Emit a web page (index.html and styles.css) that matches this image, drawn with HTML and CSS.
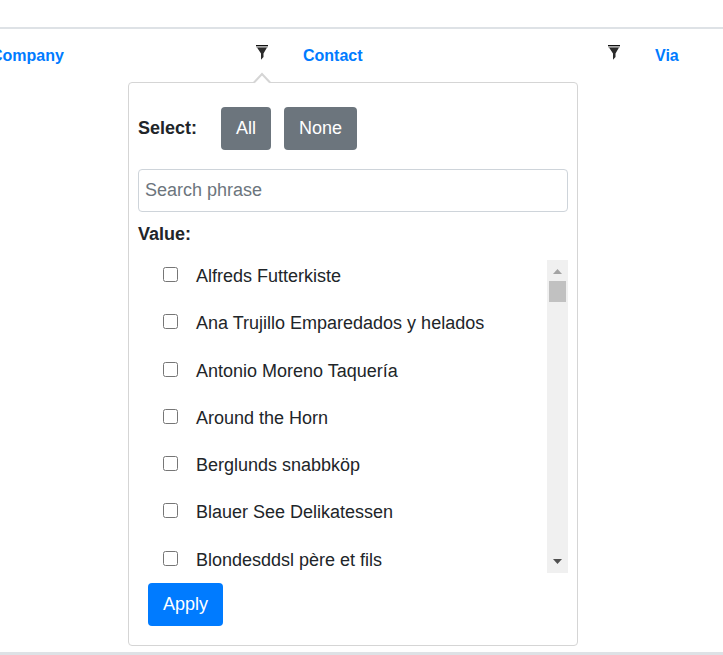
FILE: index.html
```html
<!DOCTYPE html>
<html lang="en">
<head>
<meta charset="utf-8">
<title>Customers</title>
<link rel="stylesheet" href="styles.css">
</head>
<body>
<main class="page">
  <table class="customers">
    <colgroup><col class="col-company"><col class="col-contact"><col></colgroup>
    <thead>
      <tr>
        <th scope="col"><div class="heading"><a href="#">Company</a>
          <button class="filter" type="button" aria-label="Filter by company"><svg viewBox="0 0 12 15" width="12" height="15"><path d="M0 0h12v1H0z" fill="#111"/><path d="M0 1h12v1.5H0z" fill="#aaa"/><path d="M1 2.5h10L7.5 8.5V12L5 14.8V8.5z" fill="#2b2b2b"/></svg></button></div></th>
        <th scope="col"><div class="heading"><a href="#">Contact</a>
          <button class="filter" type="button" aria-label="Filter by contact"><svg viewBox="0 0 12 15" width="12" height="15"><path d="M0 0h12v1H0z" fill="#111"/><path d="M0 1h12v1.5H0z" fill="#aaa"/><path d="M1 2.5h10L7.5 8.5V12L5 14.8V8.5z" fill="#2b2b2b"/></svg></button></div></th>
        <th scope="col"><div class="heading"><a href="#">Via</a></div></th>
      </tr>
    </thead>
  </table>
  <form class="popover">
    <svg class="caret" viewBox="0 0 20 12" width="20" height="12" aria-hidden="true"><path d="M2 11L10 2L18 11V12H2z" fill="#fff"/><path d="M2 10.5L10 2L18 10.5" fill="none" stroke="#d5d5d5" stroke-width="2"/></svg>
    <div class="select-row">
      <strong>Select:</strong>
      <button class="btn" type="button">All</button>
      <button class="btn" type="button">None</button>
    </div>
    <input class="search" type="text" placeholder="Search phrase" aria-label="Search phrase">
    <strong class="value-label">Value:</strong>
    <div class="list">
      <ul class="options">
        <li><label><input type="checkbox">Alfreds Futterkiste</label></li>
        <li><label><input type="checkbox">Ana Trujillo Emparedados y helados</label></li>
        <li><label><input type="checkbox">Antonio Moreno Taquería</label></li>
        <li><label><input type="checkbox">Around the Horn</label></li>
        <li><label><input type="checkbox">Berglunds snabbköp</label></li>
        <li><label><input type="checkbox">Blauer See Delikatessen</label></li>
        <li><label><input type="checkbox">Blondesddsl père et fils</label></li>
      </ul>
      <div class="scrollbar" aria-hidden="true">
        <svg viewBox="0 0 21 21" width="21" height="21"><path d="M6 14L10.5 9L15 14z" fill="#a3a3a3"/></svg>
        <div class="thumb"></div>
        <svg class="down" viewBox="0 0 21 21" width="21" height="21"><path d="M6 7L10.5 12L15 7z" fill="#505050"/></svg>
      </div>
    </div>
    <button class="btn apply" type="button">Apply</button>
  </form>
</main>
</body>
</html>
```

FILE: styles.css
```css
* {
  box-sizing: border-box;
}

body {
  margin: 0;
  background: #fff;
  color: #212529;
  font: 18px/27px "Liberation Sans", Arial, sans-serif;
}

.page {
  position: relative;
  min-height: 100vh;
  padding-top: 27px;
  overflow: hidden;
  border-bottom: 3px solid #dee2e6;
}

.customers {
  width: calc(100% + 21px);
  margin-left: -21px;
  table-layout: fixed;
  border-collapse: separate;
  border-spacing: 0;
}

.col-company {
  width: 312px;
}

.col-contact {
  width: 352px;
}

.customers th {
  padding: 15px 23px 14px 12px;
  border-top: 2px solid #dee2e6;
  font-size: 16px;
  line-height: 24px;
  text-align: left;
}

.heading {
  display: flex;
  justify-content: space-between;
}

.heading a {
  color: #007bff;
  text-decoration: none;
}

.filter {
  display: flex;
  align-items: flex-start;
  padding: 1px 0 0;
  border: 0;
  background: none;
}

.popover {
  position: absolute;
  top: 82px;
  left: 128px;
  width: 450px;
  padding: 24px 9px 19px;
  border: 1px solid #d5d5d5;
  border-radius: 4px;
  background: #fff;
}

.caret {
  position: absolute;
  top: -11px;
  left: 123px;
}

.select-row {
  display: flex;
  align-items: center;
  gap: 13px;
  margin-bottom: 19px;
}

.select-row strong {
  margin-right: 11px;
}

.btn {
  height: 43px;
  padding: 0 15px;
  border: 0;
  border-radius: 4px;
  background: #6c757d;
  color: #fff;
  font: inherit;
}

.search {
  display: block;
  width: 100%;
  height: 43px;
  padding: 0 6px;
  border: 1px solid #ced4da;
  border-radius: 4px;
  font: inherit;
}

.search::placeholder {
  color: #6c757d;
  opacity: 1;
}

.value-label {
  display: block;
  margin: 9px 0 12px;
}

.list {
  display: flex;
  height: 313px;
  overflow: hidden;
}

.options {
  display: grid;
  flex: 1;
  grid-template-rows: repeat(7, 1fr);
  height: 331px;
  margin: 3px 0 0;
  padding: 0 0 0 25px;
  list-style: none;
}

.options label {
  display: flex;
  align-items: flex-start;
  gap: 18px;
}

.options input {
  width: 15px;
  height: 15px;
  margin: 4px 0 0;
}

.scrollbar {
  display: flex;
  flex-direction: column;
  width: 21px;
  background: #f0f0f0;
}

.thumb {
  height: 21px;
  margin: 0 2px;
  background: #c1c1c1;
}

.down {
  margin-top: auto;
}

.apply {
  display: block;
  margin: 10px 0 0 10px;
  background: #007bff;
}
```
